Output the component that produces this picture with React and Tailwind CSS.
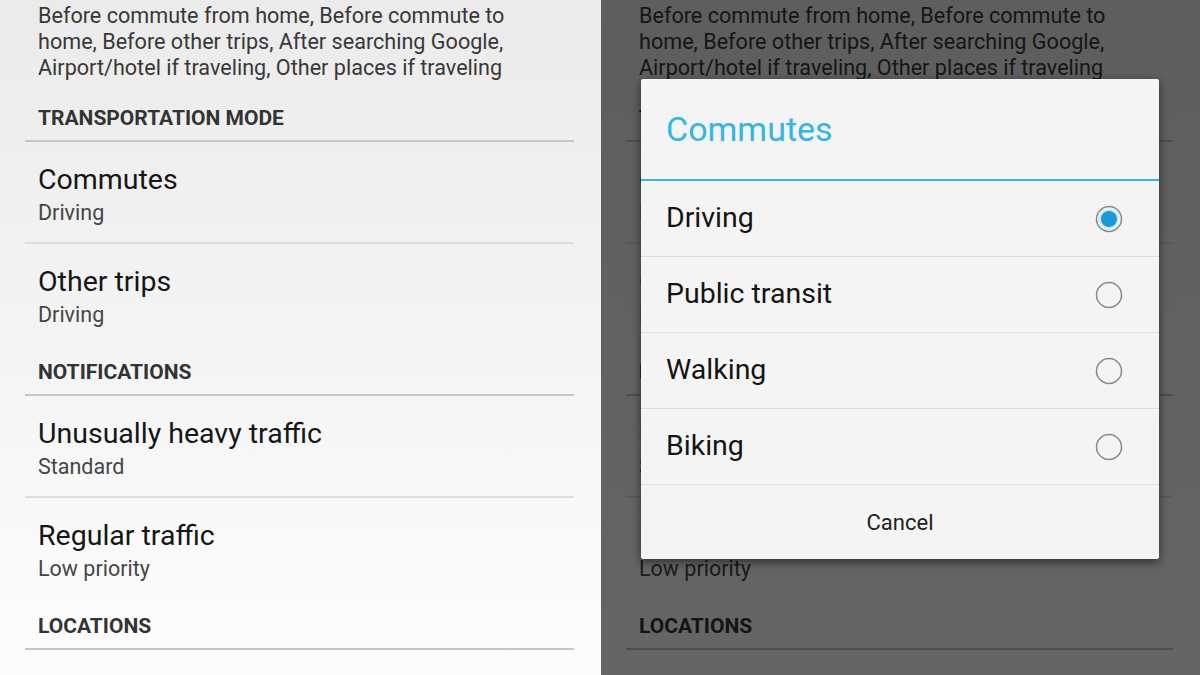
import React from 'react';

const Header = ({ label, first }) => (
  <div className={first ? 'pt-[24px]' : 'pt-[15px]'}>
    <div className="pl-[13px] pb-[9px] text-[21px] leading-[26px] font-bold text-[#333333]">{label}</div>
    <div className="h-[2px] bg-[#c6c6c6]" />
  </div>
);

const Item = ({ title, value }) => (
  <div className="pl-[13px] pt-[22px] pb-[16px]">
    <div className="text-[28.5px] leading-[32px] text-[#161616]">{title}</div>
    <div className="mt-[4px] text-[21.5px] leading-[26px] text-[#454545]">{value}</div>
  </div>
);

const Divider = () => <div className="h-[2px] bg-[#dedede]" />;

// the settings list, drawn in both halves
const Settings = () => (
  <div className="h-full pl-[25px] pr-[27px] bg-linear-to-b from-[#ebebeb] to-[#fdfdfd]">
    <p className="pt-[3px] pl-[13px] text-[21.6px] leading-[26px] text-[#383838] whitespace-nowrap">
      Before commute from home, Before commute to
      <br />
      home, Before other trips, After searching Google,
      <br />
      Airport/hotel if traveling, Other places if traveling
    </p>
    <Header label="TRANSPORTATION MODE" first />
    <Item title="Commutes" value="Driving" />
    <Divider />
    <Item title="Other trips" value="Driving" />
    <Header label="NOTIFICATIONS" />
    <Item title="Unusually heavy traffic" value="Standard" />
    <Divider />
    <Item title="Regular traffic" value="Low priority" />
    <Header label="LOCATIONS" />
  </div>
);

const Radio = ({ checked }) => (
  <svg width="28" height="28" viewBox="0 0 28 28">
    {checked ? (
      <>
        <circle cx="14" cy="14" r="12.5" fill="#e2f2fa" stroke="#8a8a8a" strokeWidth="1.5" />
        <circle cx="14" cy="14" r="8.5" fill="#1c9ad6" stroke="#bfe3f3" strokeWidth="1" />
      </>
    ) : (
      <circle cx="14" cy="14" r="12.5" fill="none" stroke="#8a8a8a" strokeWidth="1.5" />
    )}
  </svg>
);

const options = ['Driving', 'Public transit', 'Walking', 'Biking'];

const Dialog = () => (
  <div className="absolute left-[40px] top-[79px] w-[518px] bg-[#f4f4f4] rounded-[2px] shadow-[0_3px_10px_rgba(0,0,0,0.55)]">
    <div className="h-[100px] flex items-center pl-[25px] text-[34px] text-[#33b5e5]">Commutes</div>
    <div className="h-[2px] bg-[#33b5e5]" />
    {options.map((opt, i) => (
      <div
        key={opt}
        className="h-[76px] flex items-center justify-between pl-[25px] pr-[36px] border-b border-[#dcdcdc]"
      >
        <span className="text-[28.5px] text-[#141414]">{opt}</span>
        <Radio checked={i === 0} />
      </div>
    ))}
    <div className="h-[74px] flex items-center justify-center text-[22px] text-[#1e1e1e]">Cancel</div>
  </div>
);

export default function App() {
  return (
    <div className="w-[1200px] h-[675px] flex overflow-hidden font-[family-name:Roboto,sans-serif]">
      <div className="w-[601px] h-full">
        <Settings />
      </div>
      <div className="relative flex-1 h-full">
        <Settings />
        <div className="absolute inset-0 bg-black/60" />
        <Dialog />
      </div>
    </div>
  );
}
